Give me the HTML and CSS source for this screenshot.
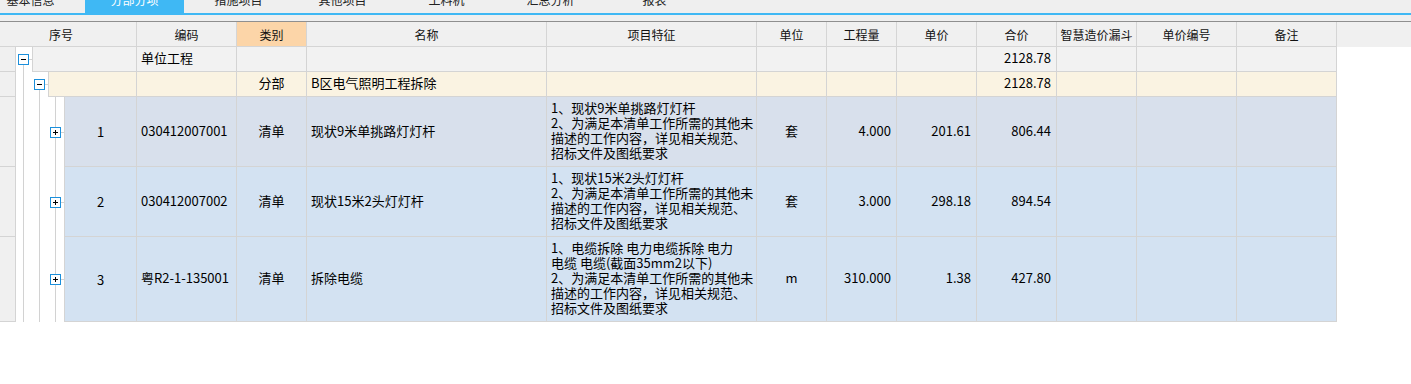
FILE: index.html
```html
<!DOCTYPE html>
<html>
<head>
    <meta charset="utf-8" />
    <title>分部分项</title>
    <link rel="stylesheet" href="styles.css">
</head>
<body>
    <div class="topbar">
        <div class="tabs">
            <div class="tab"><span>基本信息</span></div>
            <div class="tab active"><span>分部分项</span></div>
            <div class="tab"><span>措施项目</span></div>
            <div class="tab"><span>其他项目</span></div>
            <div class="tab"><span>工料机</span></div>
            <div class="tab"><span>汇总分析</span></div>
            <div class="tab"><span>报表</span></div>
        </div>
    </div>

    <div class="sheet">
        <div class="head">
            <div class="row">
                <div class="hc seqhead">序号</div>
                <div class="hc">编码</div>
                <div class="hc kind">类别</div>
                <div class="hc">名称</div>
                <div class="hc">项目特征</div>
                <div class="hc">单位</div>
                <div class="hc">工程量</div>
                <div class="hc">单价</div>
                <div class="hc">合价</div>
                <div class="hc">智慧造价漏斗</div>
                <div class="hc">单价编号</div>
                <div class="hc">备注</div>
            </div>
        </div>

        <div class="row unit">
            <div class="rh"></div>
            <div class="seq">
                <div class="guide toggle open">
                    <svg width="11" height="11" viewBox="0 0 11 11"><rect x="0.5" y="0.5" width="10" height="10" fill="#fff" stroke="#1b8fdb"/><path d="M3 5.5h5" stroke="#000"/></svg>
                </div>
                <div class="num"></div>
            </div>
            <div class="c">单位工程</div>
            <div class="c"></div>
            <div class="c"></div>
            <div class="c"></div>
            <div class="c"></div>
            <div class="c"></div>
            <div class="c"></div>
            <div class="c r">2128.78</div>
            <div class="c"></div>
            <div class="c"></div>
            <div class="c"></div>
        </div>

        <div class="row part">
            <div class="rh"></div>
            <div class="seq">
                <div class="guide line"></div>
                <div class="guide toggle open">
                    <svg width="11" height="11" viewBox="0 0 11 11"><rect x="0.5" y="0.5" width="10" height="10" fill="#fff" stroke="#1b8fdb"/><path d="M3 5.5h5" stroke="#000"/></svg>
                </div>
                <div class="num"></div>
            </div>
            <div class="c"></div>
            <div class="c ctr">分部</div>
            <div class="c">B区电气照明工程拆除</div>
            <div class="c"></div>
            <div class="c"></div>
            <div class="c"></div>
            <div class="c"></div>
            <div class="c r">2128.78</div>
            <div class="c"></div>
            <div class="c"></div>
            <div class="c"></div>
        </div>

        <div class="row item current">
            <div class="rh"></div>
            <div class="seq">
                <div class="guide line"></div>
                <div class="guide line"></div>
                <div class="guide toggle leaf">
                    <svg width="11" height="11" viewBox="0 0 11 11"><rect x="0.5" y="0.5" width="10" height="10" fill="#fff" stroke="#1b8fdb"/><path d="M3 5.5h5M5.5 3v5" stroke="#000"/></svg>
                </div>
                <div class="num">1</div>
            </div>
            <div class="c">030412007001</div>
            <div class="c ctr">清单</div>
            <div class="c">现状9米单挑路灯灯杆</div>
            <div class="c"><div>1、现状9米单挑路灯灯杆<br>2、为满足本清单工作所需的其他未<br>描述的工作内容，详见相关规范、<br>招标文件及图纸要求</div></div>
            <div class="c ctr">套</div>
            <div class="c r">4.000</div>
            <div class="c r">201.61</div>
            <div class="c r">806.44</div>
            <div class="c"></div>
            <div class="c"></div>
            <div class="c"></div>
        </div>

        <div class="row item">
            <div class="rh"></div>
            <div class="seq">
                <div class="guide line"></div>
                <div class="guide line"></div>
                <div class="guide toggle leaf">
                    <svg width="11" height="11" viewBox="0 0 11 11"><rect x="0.5" y="0.5" width="10" height="10" fill="#fff" stroke="#1b8fdb"/><path d="M3 5.5h5M5.5 3v5" stroke="#000"/></svg>
                </div>
                <div class="num">2</div>
            </div>
            <div class="c">030412007002</div>
            <div class="c ctr">清单</div>
            <div class="c">现状15米2头灯灯杆</div>
            <div class="c"><div>1、现状15米2头灯灯杆<br>2、为满足本清单工作所需的其他未<br>描述的工作内容，详见相关规范、<br>招标文件及图纸要求</div></div>
            <div class="c ctr">套</div>
            <div class="c r">3.000</div>
            <div class="c r">298.18</div>
            <div class="c r">894.54</div>
            <div class="c"></div>
            <div class="c"></div>
            <div class="c"></div>
        </div>

        <div class="row item">
            <div class="rh"></div>
            <div class="seq">
                <div class="guide line"></div>
                <div class="guide line"></div>
                <div class="guide toggle leaf">
                    <svg width="11" height="11" viewBox="0 0 11 11"><rect x="0.5" y="0.5" width="10" height="10" fill="#fff" stroke="#1b8fdb"/><path d="M3 5.5h5M5.5 3v5" stroke="#000"/></svg>
                </div>
                <div class="num">3</div>
            </div>
            <div class="c">粤R2-1-135001</div>
            <div class="c ctr">清单</div>
            <div class="c">拆除电缆</div>
            <div class="c"><div>1、电缆拆除 电力电缆拆除 电力<br>电缆 电缆(截面35mm2以下)<br>2、为满足本清单工作所需的其他未<br>描述的工作内容，详见相关规范、<br>招标文件及图纸要求</div></div>
            <div class="c ctr">m</div>
            <div class="c r">310.000</div>
            <div class="c r">1.38</div>
            <div class="c r">427.80</div>
            <div class="c"></div>
            <div class="c"></div>
            <div class="c"></div>
        </div>
    </div>
</body>
</html>
```

FILE: styles.css
```css
body {
    margin: 0;
    font-family: "Noto Sans CJK SC", "Noto Sans", sans-serif;
    background-color: #fff;
    color: #000;
}

.topbar {
    background-color: #efefef;
    height: 21px;
    border-bottom: 1px solid #8f8f8f;
}

.tabs {
    display: flex;
    gap: 5px;
    margin-left: -19px;
    height: 13px;
    border-bottom: 2px solid #3fb8f4;
    overflow: hidden;
}

.tab {
    width: 99px;
    flex-shrink: 0;
    text-align: center;
    font-size: 12px;
    color: #222;
}

    .tab span {
        display: block;
        line-height: 14px;
        margin-top: -7px;
    }

.tab.active {
    background-color: #3fb8f4;
    color: #fff;
}

.row {
    display: grid;
    grid-template-columns: 16px 121px 100px 70px 240px 210px 70px 70px 80px 80px 80px 100px 100px;
    width: 1337px;
}

.head {
    background-color: #f0f0f0;
}

.hc {
    height: 25px;
    box-sizing: border-box;
    display: flex;
    align-items: center;
    justify-content: center;
    font-size: 12px;
    color: #111;
    border-right: 1px solid #d5d5d5;
    border-bottom: 1px solid #d5d5d5;
}

.seqhead {
    grid-column: span 2;
    padding-right: 14px;
}

.hc.kind {
    background-color: #fcd5a8;
}

.rh {
    background-color: #f0f0f0;
    border-right: 1px solid #d4d4d4;
    border-bottom: 1px solid #d4d4d4;
}

.seq {
    display: flex;
    background-color: #fff;
}

.guide {
    width: 16px;
    flex-shrink: 0;
}

.guide.line {
    background: linear-gradient(#d2d2d2, #d2d2d2) 7px 0 / 1px 100% no-repeat;
}

.guide.toggle {
    display: flex;
    align-items: center;
}

    .guide.toggle svg {
        display: block;
        margin-left: 2px;
    }

.guide.open {
    background:
        linear-gradient(#d2d2d2, #d2d2d2) 7px 100% / 1px 50% no-repeat,
        linear-gradient(#d2d2d2, #d2d2d2) 13px 50% / 3px 1px no-repeat;
}

.guide.leaf {
    background:
        linear-gradient(#d2d2d2, #d2d2d2) 7px 0 / 1px 100% no-repeat,
        linear-gradient(#d2d2d2, #d2d2d2) 13px 50% / 3px 1px no-repeat;
}

.num {
    flex: 1;
    display: flex;
    align-items: center;
    justify-content: center;
    font-size: 13px;
    line-height: 15px;
    border-left: 1px solid #d4d4d4;
    border-right: 1px solid #d4d4d4;
    border-bottom: 1px solid #d4d4d4;
}

.c {
    display: flex;
    align-items: center;
    padding: 3px 4px 6px;
    font-size: 13px;
    line-height: 15px;
    white-space: nowrap;
    overflow: hidden;
    border-right: 1px solid #d4d4d4;
    border-bottom: 1px solid #d4d4d4;
}

.c.ctr {
    justify-content: center;
}

.c.r {
    justify-content: flex-end;
    padding-right: 5px;
}

.unit .c, .unit .num {
    background-color: #f2f2f2;
}

.part .c, .part .num {
    background-color: #faf3e2;
}

.item .c, .item .num {
    background-color: #d3e2f2;
}

.item.current .c, .item.current .num {
    background-color: #d8e0ec;
}
```
